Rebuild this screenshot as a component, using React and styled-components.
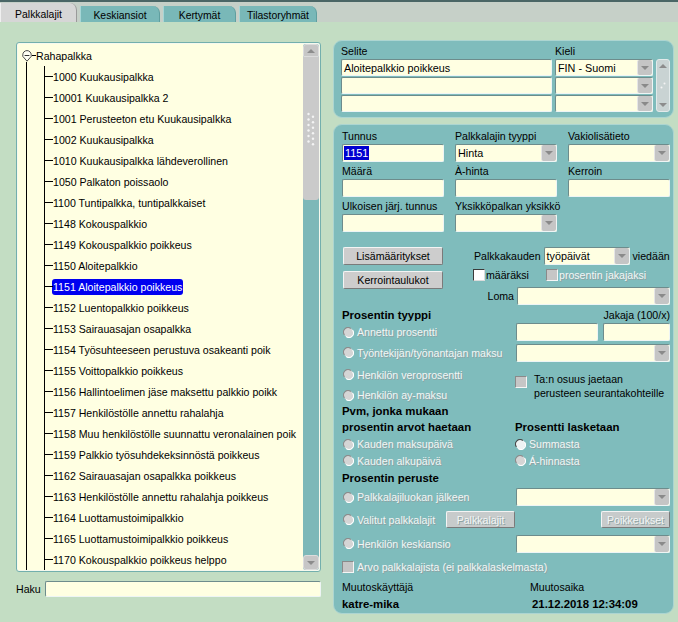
import React from 'react';
import styled, { createGlobalStyle } from 'styled-components';

const GREEN = '#c3ddc3';
const TEAL = '#7fbcbc';
const CREAM = '#ffffe2';
const BTN = '#cdcdcd';

const Global = createGlobalStyle`
  html, body { margin: 0; padding: 0; background: ${GREEN}; }
  body { font-family: "Liberation Sans", Arial, sans-serif; font-size: 10.6px; color: #000; }
  * { box-sizing: border-box; }
`;

const Frame = styled.div`
  width: 678px;
  height: 622px;
  overflow: hidden;
  display: flex;
  flex-direction: column;
  background: ${GREEN};
`;

const TabBar = styled.div`
  height: 22px;
  flex: none;
  display: flex;
  align-items: flex-end;
  gap: 3px;
  background: #c6d0c8;
  border-top: 2px solid #4a6666;
`;

const Tab = styled.div`
  width: ${p => p.$w}px;
  height: ${p => (p.$active ? 19 : 16)}px;
  padding-top: ${p => (p.$active ? 4 : 2)}px;
  background: ${p => (p.$active ? '#d6d6d6' : '#79b8b8')};
  border-left: 1px solid ${p => (p.$active ? '#f0f0f0' : '#a6d6d6')};
  border-right: 1px solid ${p => (p.$active ? '#9a9a9a' : '#5f9f9f')};
  border-radius: 0 7px 0 0;
  display: flex;
  align-items: center;
  justify-content: center;
  font-size: 10.4px;
`;

const Body = styled.div`
  display: flex;
  padding-left: 16px;
  gap: 12px;
  flex: 1;
`;

const LeftCol = styled.div`
  width: 305px;
  margin-top: 20px;
  display: flex;
  flex-direction: column;
`;

const TreeBox = styled.div`
  height: 530px;
  display: flex;
  padding: 1px;
  border: 1px solid #73afad;
  border-radius: 3px;
  background: #f6f9ee;
`;

const TreeContent = styled.div`
  flex: 1;
  min-width: 0;
  overflow: hidden;
  display: flex;
  flex-direction: column;
  padding-top: 1px;
  background: ${CREAM};
  white-space: nowrap;
`;

const RootRow = styled.div`
  position: relative;
  height: 21px;
  flex: none;
  display: flex;
  align-items: center;
  padding-left: 4px;
`;

const RootLine = styled.span`
  position: absolute;
  left: 8px;
  top: 17px;
  bottom: 0;
  width: 1px;
  background: #000;
`;

const Dash = styled.span`
  width: 4px;
  height: 1px;
  background: #000;
`;

const Children = styled.div`
  flex: 1;
  margin-left: 8px;
  border-left: 1px solid #000;
  padding-left: 17px;
  display: flex;
  flex-direction: column;
`;

const ChildList = styled.div`
  flex: 1;
  border-left: 1px solid #000;
`;

const TreeItem = styled.div`
  position: relative;
  height: 21px;
  display: flex;
  align-items: center;
  padding-left: 8px;
  &::before {
    content: '';
    position: absolute;
    left: 0;
    top: 10px;
    width: 8px;
    height: 1px;
    background: #000;
  }
`;

const ItemLabel = styled.span`
  padding: 2px 1px 2px 1px;
  margin-left: -1px;
  border-radius: 3px;
  background: ${p => (p.$sel ? '#0000f0' : 'transparent')};
  color: ${p => (p.$sel ? '#fff' : '#000')};
`;

const VScroll = styled.div`
  width: 16px;
  flex: none;
  display: flex;
  flex-direction: column;
  background: #7db8b8;
  border-radius: 3px;
`;

const ScrollBtn = styled.div`
  height: ${p => p.$h || 14}px;
  flex: none;
  background: #c6c6c6;
  border-radius: ${p => (p.$top ? '3px 3px 0 0' : '3px')};
  border: 1px solid #dcdcdc;
  display: flex;
  align-items: center;
  justify-content: center;
`;

const Thumb = styled.div`
  height: 143px;
  flex: none;
  background: #cacaca;
  border-radius: 0 0 3px 3px;
  display: flex;
  align-items: center;
  justify-content: center;
`;

const Track = styled.div`
  flex: 1;
`;

const Arrow = styled.span`
  width: 0;
  height: 0;
  border-left: 4px solid transparent;
  border-right: 4px solid transparent;
  ${p => (p.$up ? 'border-bottom: 4px solid #8c8c8c;' : 'border-top: 4px solid #8c8c8c;')}
`;

const HakuRow = styled.div`
  margin-top: 9px;
  display: flex;
  align-items: center;
`;

const HakuLabel = styled.span`
  width: 29px;
  flex: none;
`;

const RightCol = styled.div`
  width: 344px;
  margin-top: 18px;
  display: flex;
  flex-direction: column;
`;

const Panel = styled.div`
  width: 341px;
  background: ${TEAL};
  border: 1px solid #acd5d1;
  border-radius: 9px;
`;

const LangPanel = styled(Panel)`
  height: 78px;
  padding: 3px 0 0 7px;
  display: grid;
  grid-template-columns: 211px 98px 14px;
  grid-template-rows: 14px 17px 17px 17px;
  column-gap: 3px;
  row-gap: 1px;
`;

const MiniScroll = styled.div`
  grid-column: 3;
  grid-row: 2 / span 3;
  background: #c9d3d3;
  border: 1px solid #e2eaea;
  border-radius: 3px;
  display: flex;
  flex-direction: column;
  justify-content: space-between;
  align-items: center;
  padding: 4px 0;
`;

const DetailPanel = styled(Panel)`
  height: 490px;
  margin-top: 6px;
  padding: 4px 0 0 8px;
  display: flex;
  flex-direction: column;
`;

const Label = styled.div`
  height: 14px;
  line-height: 14px;
  white-space: nowrap;
`;

const Field = styled.div`
  height: ${p => p.$h || 18}px;
  width: ${p => (p.$w ? `${p.$w}px` : 'auto')};
  flex: ${p => (p.$grow ? '1' : 'none')};
  background: ${CREAM};
  border: 1px solid;
  border-color: #6d8c8c #eef5f5 #eef5f5 #6d8c8c;
  border-radius: 2px;
  display: flex;
  align-items: center;
  padding-left: 2px;
  overflow: hidden;
  white-space: nowrap;
  font-size: 10.8px;
`;

const DropBtn = styled.span`
  margin-left: auto;
  width: 15px;
  align-self: stretch;
  background: #c5c5c5;
  border-left: 1px solid #e6e6e6;
  border-radius: 2px;
  display: flex;
  align-items: center;
  justify-content: center;
  &::after {
    content: '';
    border-left: 4px solid transparent;
    border-right: 4px solid transparent;
    border-top: 4px solid #8a8a8a;
  }
`;

const SelText = styled.span`
  background: #0000d0;
  color: #fff;
  padding: 1px 1px;
  margin-left: -1px;
`;

const UpperGrid = styled.div`
  display: grid;
  grid-template-columns: repeat(3, 102px);
  column-gap: 11px;
  row-gap: 2px;
`;

const Group = styled.div`
  display: flex;
  flex-direction: column;
  gap: 1px;
`;

const ButtonBlock = styled.div`
  display: flex;
  margin-top: 15px;
  margin-left: 1px;
  gap: 30px;
`;

const BtnCol = styled.div`
  width: 100px;
  display: flex;
  flex-direction: column;
  gap: 6px;
`;

const Button = styled.div`
  width: ${p => (p.$w ? `${p.$w}px` : '100%')};
  height: ${p => p.$h || 18}px;
  flex: none;
  background: ${p => (p.$disabled ? '#c7cbcb' : BTN)};
  border: 1px solid;
  border-color: #f4f4f4 #7a7a7a #7a7a7a #f4f4f4;
  border-radius: 2px;
  display: flex;
  align-items: center;
  justify-content: center;
  white-space: nowrap;
`;

const OptCol = styled.div`
  width: 197px;
  display: flex;
  flex-direction: column;
`;

const OptRow = styled.div`
  height: ${p => p.$h}px;
  margin-top: ${p => p.$mt || 0}px;
  display: flex;
  align-items: center;
  justify-content: ${p => p.$justify || 'flex-start'};
  gap: 3px;
  white-space: nowrap;
`;

const Indent = styled.span`
  margin-left: 1px;
`;

const CheckItem = styled.span`
  width: ${p => (p.$w ? `${p.$w}px` : 'auto')};
  display: flex;
  align-items: center;
  gap: ${p => p.$gap ?? 1}px;
`;

const Check = styled.span`
  width: 12px;
  height: 12px;
  flex: none;
  border: 1px solid;
  background: ${p => (p.$disabled ? '#c6c6c6' : '#fff')};
  border-color: ${p => (p.$disabled ? '#8a8a8a #f6f6f6 #f6f6f6 #8a8a8a' : '#3a3a3a #dcdcdc #dcdcdc #3a3a3a')};
  align-self: ${p => (p.$top ? 'flex-start' : 'center')};
  margin-top: ${p => p.$mt || 0}px;
`;

const Dis = styled.span`
  color: #f2f6f6;
  text-shadow: 1px 1px 0 #8ea3a3;
  white-space: nowrap;
`;

const Bold = styled.span`
  font-weight: bold;
  font-size: 11.4px;
  white-space: nowrap;
`;

const LowerGrid = styled.div`
  margin-top: 2px;
  display: grid;
  grid-template-columns: 173px 155px;
  grid-template-rows: 15px 20px 21px 23px 18px 14px 17px 18px 15px 20px 18px 27px 21px 25px 16px 17px;
`;

const Cell = styled.div`
  grid-column: ${p => (p.$wide ? '1 / span 2' : 'auto')};
  grid-row: ${p => (p.$rows ? `span ${p.$rows}` : 'auto')};
  display: flex;
  align-items: ${p => p.$align || 'center'};
  justify-content: ${p => p.$justify || 'flex-start'};
  padding-left: ${p => p.$pl || 0}px;
  padding-top: ${p => p.$pt || 0}px;
  gap: ${p => p.$gap || 0}px;
  white-space: nowrap;
`;

const RadioWrap = styled.span`
  display: flex;
  align-items: center;
  gap: 3px;
  margin-left: ${p => p.$ml ?? 1}px;
`;

const TwoLines = styled.div`
  line-height: 14px;
`;

function Radio({ light, children, ml }) {
  return (
    <RadioWrap $ml={ml}>
      <svg width="11" height="11" viewBox="0 0 12 12">
        <circle cx="6" cy="6" r="5.3" fill={light ? '#eef3f3' : '#d5d5d5'} />
        <path d="M1.6 8.6 A5 5 0 0 1 8.6 1.6" stroke={light ? '#4a4a4a' : '#8c8c8c'} strokeWidth="1.2" fill="none" />
        <path d="M3.4 10.4 A5 5 0 0 0 10.4 3.4" stroke="#ffffff" strokeWidth="1.2" fill="none" />
      </svg>
      <Dis>{children}</Dis>
    </RadioWrap>
  );
}

function Select({ w, h, value, grow }) {
  return (
    <Field $w={w} $h={h} $grow={grow}>
      {value && <span>{value}</span>}
      <DropBtn />
    </Field>
  );
}

function Grip() {
  const dots = [];
  for (let i = 0; i < 6; i++) {
    dots.push(<circle key={`a${i}`} cx="2.5" cy={2 + i * 5.5} r="1.2" fill="#f4f4f4" />);
    dots.push(<circle key={`b${i}`} cx="7" cy={4.7 + i * 5.5} r="1.2" fill="#f4f4f4" />);
  }
  return (
    <svg width="10" height="34" viewBox="0 0 10 34">
      {dots}
    </svg>
  );
}

function Toggle() {
  return (
    <svg width="10" height="12" viewBox="0 0 10 12" style={{ flex: 'none' }}>
      <path d="M0.8 4.8 A4.2 4.2 0 0 1 9.2 4.8 L9.2 6.4 L5 11.2 L0.8 6.4 Z" fill="#fffff4" stroke="#4a4a4a" strokeWidth="1" />
      <line x1="2.6" y1="5.5" x2="7.4" y2="5.5" stroke="#333" strokeWidth="1" />
    </svg>
  );
}

const items = [
  '1000 Kuukausipalkka',
  '10001 Kuukausipalkka 2',
  '1001 Perusteeton etu Kuukausipalkka',
  '1002 Kuukausipalkka',
  '1010 Kuukausipalkka lähdeverollinen',
  '1050 Palkaton poissaolo',
  '1100 Tuntipalkka, tuntipalkkaiset',
  '1148 Kokouspalkkio',
  '1149 Kokouspalkkio poikkeus',
  '1150 Aloitepalkkio',
  '1151 Aloitepalkkio poikkeus',
  '1152 Luentopalkkio poikkeus',
  '1153 Sairauasajan osapalkka',
  '1154 Työsuhteeseen perustuva osakeanti poik',
  '1155 Voittopalkkio poikkeus',
  '1156 Hallintoelimen jäse maksettu palkkio poikk',
  '1157 Henkilöstölle annettu rahalahja',
  '1158 Muu henkilöstölle suunnattu veronalainen poik',
  '1159 Palkkio työsuhdekeksinnöstä poikkeus',
  '1162 Sairauasajan osapalkka poikkeus',
  '1163 Henkilöstölle annettu rahalahja poikkeus',
  '1164 Luottamustoimipalkkio',
  '1165 Luottamustoimipalkkio poikkeus',
  '1170 Kokouspalkkio poikkeus helppo',
];

const tabs = [
  { t: 'Palkkalajit', w: 77, active: true },
  { t: 'Keskiansiot', w: 80 },
  { t: 'Kertymät', w: 73 },
  { t: 'Tilastoryhmät', w: 78 },
];

export default function App() {
  return (
    <>
      <Global />
      <Frame>
        <TabBar>
          {tabs.map(tab => (
            <Tab key={tab.t} $w={tab.w} $active={tab.active}>
              {tab.t}
            </Tab>
          ))}
        </TabBar>
        <Body>
          <LeftCol>
            <TreeBox>
              <TreeContent>
                <RootRow>
                  <Toggle />
                  <Dash />
                  <span>Rahapalkka</span>
                  <RootLine />
                </RootRow>
                <Children>
                  <ChildList>
                    {items.map(it => (
                      <TreeItem key={it}>
                        <ItemLabel $sel={it.startsWith('1151')}>{it}</ItemLabel>
                      </TreeItem>
                    ))}
                  </ChildList>
                </Children>
              </TreeContent>
              <VScroll>
                <ScrollBtn $top $h={13}>
                  <Arrow $up />
                </ScrollBtn>
                <Thumb>
                  <Grip />
                </Thumb>
                <Track />
                <ScrollBtn $h={15}>
                  <Arrow />
                </ScrollBtn>
              </VScroll>
            </TreeBox>
            <HakuRow>
              <HakuLabel>Haku</HakuLabel>
              <Field $h={16} $grow />
            </HakuRow>
          </LeftCol>

          <RightCol>
            <LangPanel>
              <Label>Selite</Label>
              <Label>Kieli</Label>
              <span />
              <Field $h={17}>Aloitepalkkio poikkeus</Field>
              <Select h={17} value="FIN - Suomi" />
              <MiniScroll>
                <Arrow $up />
                <svg width="8" height="10" viewBox="0 0 8 10">
                  <circle cx="5.5" cy="2.5" r="1" fill="#f4f4f4" />
                  <circle cx="2.5" cy="6.5" r="1" fill="#f4f4f4" />
                </svg>
                <Arrow />
              </MiniScroll>
              <Field $h={17} />
              <Select h={17} />
              <Field $h={17} />
              <Select h={17} />
            </LangPanel>

            <DetailPanel>
              <UpperGrid>
                <Group>
                  <Label>Tunnus</Label>
                  <Field>
                    <SelText>1151</SelText>
                  </Field>
                </Group>
                <Group>
                  <Label>Palkkalajin tyyppi</Label>
                  <Select value="Hinta" />
                </Group>
                <Group>
                  <Label>Vakiolisätieto</Label>
                  <Select />
                </Group>
                <Group>
                  <Label>Määrä</Label>
                  <Field />
                </Group>
                <Group>
                  <Label>À-hinta</Label>
                  <Field />
                </Group>
                <Group>
                  <Label>Kerroin</Label>
                  <Field />
                </Group>
                <Group>
                  <Label>Ulkoisen järj. tunnus</Label>
                  <Field />
                </Group>
                <Group>
                  <Label>Yksikköpalkan yksikkö</Label>
                  <Select />
                </Group>
              </UpperGrid>

              <ButtonBlock>
                <BtnCol>
                  <Button>Lisämääritykset</Button>
                  <Button>Kerrointaulukot</Button>
                </BtnCol>
                <OptCol>
                  <OptRow $h={18}>
                    <Indent>Palkkakauden</Indent>
                    <Select w={86} value="työpäivät" />
                    <span>viedään</span>
                  </OptRow>
                  <OptRow $h={16} $mt={2}>
                    <CheckItem $w={70}>
                      <Check />
                      <span>määräksi</span>
                    </CheckItem>
                    <CheckItem>
                      <Check $disabled />
                      <Dis>prosentin jakajaksi</Dis>
                    </CheckItem>
                  </OptRow>
                  <OptRow $h={18} $mt={4} $justify="flex-end">
                    <span>Loma</span>
                    <Select w={153} />
                  </OptRow>
                </OptCol>
              </ButtonBlock>

              <LowerGrid>
                <Cell>
                  <Bold>Prosentin tyyppi</Bold>
                </Cell>
                <Cell $justify="flex-end">Jakaja (100/x)</Cell>

                <Cell>
                  <Radio>Annettu prosentti</Radio>
                </Cell>
                <Cell $gap={5} $pl={1}>
                  <Field $w={82} $h={18} />
                  <Field $w={67} $h={18} />
                </Cell>

                <Cell>
                  <Radio>Työntekijän/työnantajan maksu</Radio>
                </Cell>
                <Cell $pl={1}>
                  <Select grow />
                </Cell>

                <Cell>
                  <Radio>Henkilön veroprosentti</Radio>
                </Cell>
                <Cell $rows={2} $align="flex-start" $pt={9} $gap={7}>
                  <Check $disabled $top $mt={4} />
                  <TwoLines>
                    Ta:n osuus jaetaan
                    <br />
                    perusteen seurantakohteille
                  </TwoLines>
                </Cell>
                <Cell>
                  <Radio>Henkilön ay-maksu</Radio>
                </Cell>

                <Cell $wide>
                  <Bold>Pvm, jonka mukaan</Bold>
                </Cell>

                <Cell>
                  <Bold>prosentin arvot haetaan</Bold>
                </Cell>
                <Cell>
                  <Bold>Prosentti lasketaan</Bold>
                </Cell>

                <Cell>
                  <Radio>Kauden maksupäivä</Radio>
                </Cell>
                <Cell>
                  <Radio light ml={0}>
                    Summasta
                  </Radio>
                </Cell>

                <Cell>
                  <Radio>Kauden alkupäivä</Radio>
                </Cell>
                <Cell>
                  <Radio ml={0}>Á-hinnasta</Radio>
                </Cell>

                <Cell $wide>
                  <Bold>Prosentin peruste</Bold>
                </Cell>

                <Cell>
                  <Radio>Palkkalajiluokan jälkeen</Radio>
                </Cell>
                <Cell $pl={1}>
                  <Select grow />
                </Cell>

                <Cell $justify="space-between">
                  <Radio>Valitut palkkalajit</Radio>
                  <Button $w={69} $h={17} $disabled>
                    <Dis>Palkkalajit</Dis>
                  </Button>
                </Cell>
                <Cell $justify="flex-end">
                  <Button $w={69} $h={17} $disabled>
                    <Dis>Poikkeukset</Dis>
                  </Button>
                </Cell>

                <Cell>
                  <Radio>Henkilön keskiansio</Radio>
                </Cell>
                <Cell $pl={1}>
                  <Select grow />
                </Cell>

                <Cell $wide $gap={3}>
                  <Check $disabled />
                  <Dis>Arvo palkkalajista (ei palkkalaskelmasta)</Dis>
                </Cell>

                <Cell>Muutoskäyttäjä</Cell>
                <Cell $pl={15}>Muutosaika</Cell>

                <Cell>
                  <Bold>katre-mika</Bold>
                </Cell>
                <Cell $pl={17}>
                  <Bold>21.12.2018 12:34:09</Bold>
                </Cell>
              </LowerGrid>
            </DetailPanel>
          </RightCol>
        </Body>
      </Frame>
    </>
  );
}
